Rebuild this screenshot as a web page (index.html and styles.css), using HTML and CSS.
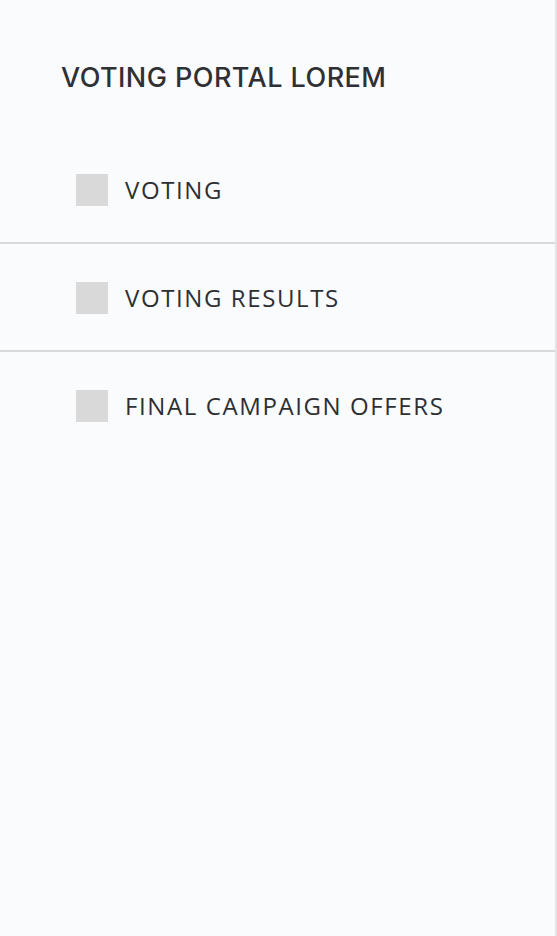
FILE: index.html
```html
<!DOCTYPE html>
<html lang="en">
<head>
<meta charset="utf-8">
<link rel="stylesheet" href="styles.css">
</head>
<body>
<aside class="sidebar">
  <h1 class="title">VOTING PORTAL LOREM</h1>
  <nav class="menu">
    <a class="item" href="#"><span class="icon"></span><span class="label">VOTING</span></a>
    <a class="item" href="#"><span class="icon"></span><span class="label">VOTING RESULTS</span></a>
    <a class="item last" href="#"><span class="icon"></span><span class="label">FINAL CAMPAIGN OFFERS</span></a>
  </nav>
</aside>
</body>
</html>
```
FILE: styles.css
```css
html, body {
  margin: 0;
  padding: 0;
  height: 100%;
}
body {
  background: #fafbfc;
  font-family: "Open Sans", "Liberation Sans", sans-serif;
  color: #2e2f33;
}
.sidebar {
  box-sizing: border-box;
  height: 100%;
  border-right: 2px solid #e3e4e6;
  background: #fafbfd;
}
.title {
  margin: 0;
  padding: 62px 0 0 61px;
  font-family: Inter, "Open Sans", sans-serif;
  font-size: 27px;
  font-weight: 500;
  line-height: 32px;
  letter-spacing: 0.45px;
  color: #2f3034;
}
.menu {
  margin-top: 42px;
  display: flex;
  flex-direction: column;
}
.item {
  display: flex;
  align-items: center;
  gap: 17px;
  padding: 38px 0 36px 76px;
  border-bottom: 2px solid #d9d9d9;
  text-decoration: none;
  color: #2e2f33;
}
.item.last {
  border-bottom: none;
}
.icon {
  width: 32px;
  height: 32px;
  background: #d9d9d9;
  flex: none;
}
.label {
  font-size: 24px;
  font-weight: 400;
  letter-spacing: 1.6px;
  line-height: 32px;
}
```
